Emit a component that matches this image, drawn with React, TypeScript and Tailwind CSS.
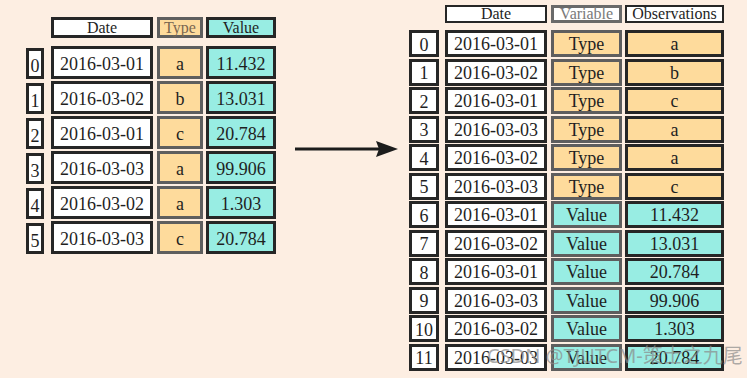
import React from 'react';

const serif = "font-['Liberation_Serif','Times_New_Roman',serif]";

const leftRows = [
  ['2016-03-01', 'a', '11.432'],
  ['2016-03-02', 'b', '13.031'],
  ['2016-03-01', 'c', '20.784'],
  ['2016-03-03', 'a', '99.906'],
  ['2016-03-02', 'a', '1.303'],
  ['2016-03-03', 'c', '20.784'],
];

const rightRows = [
  ['2016-03-01', 'Type', 'a'],
  ['2016-03-02', 'Type', 'b'],
  ['2016-03-01', 'Type', 'c'],
  ['2016-03-03', 'Type', 'a'],
  ['2016-03-02', 'Type', 'a'],
  ['2016-03-03', 'Type', 'c'],
  ['2016-03-01', 'Value', '11.432'],
  ['2016-03-02', 'Value', '13.031'],
  ['2016-03-01', 'Value', '20.784'],
  ['2016-03-03', 'Value', '99.906'],
  ['2016-03-02', 'Value', '1.303'],
  ['2016-03-03', 'Value', '20.784'],
];

const Cell = ({ children, className }: { children: React.ReactNode; className: string }) => (
  <div className={`flex items-center justify-center leading-none text-[#1f1f1f] ${className}`}>
    {children}
  </div>
);

const LeftTable = () => (
  <div className="ml-[26px] mt-[17px] flex flex-col">
    {/* header */}
    <div className="flex h-[21px] text-[16px]">
      <div className="w-[18px]" />
      <Cell className="ml-[7px] w-[102px] bg-white border-[3px] border-[#262626]">Date</Cell>
      <Cell className="ml-[4px] w-[46px] bg-[#fedb9c] border-[3px] border-[#5e5e5e] !text-[#7a6650]">Type</Cell>
      <Cell className="ml-[3px] w-[70px] bg-[#98ede3] border-[3px] border-[#262626]">Value</Cell>
    </div>
    <div className="mt-[8px] flex flex-col gap-[2px] text-[18px]">
      {leftRows.map((r, i) => (
        <div key={i} className="flex h-[33px]">
          <Cell className="mt-[2px] w-[18px] bg-white border-[3px] border-[#262626] pt-[4px]">{i}</Cell>
          <Cell className="ml-[7px] w-[102px] bg-white border-[3px] border-[#262626] pt-[2px]">{r[0]}</Cell>
          <Cell className="ml-[4px] w-[46px] bg-[#fedb9c] border-[3px] border-[#5e5e5e] pt-[2px]">{r[1]}</Cell>
          <Cell className="ml-[3px] w-[70px] bg-[#98ede3] border-[3px] border-[#262626] pt-[2px]">{r[2]}</Cell>
        </div>
      ))}
    </div>
  </div>
);

const RightTable = () => (
  <div className="ml-[10px] mt-[5px] flex flex-col">
    <div className="flex h-[18px] text-[16px]">
      <div className="w-[30px]" />
      <Cell className="ml-[6px] w-[102px] bg-white border-[2px] border-[#262626]">Date</Cell>
      <Cell className="ml-[4px] w-[71px] bg-white border-[3px] border-[#6a6a6a] !text-[#7a7a7a]">Variable</Cell>
      <Cell className="ml-[3px] w-[99px] bg-white border-[2px] border-[#262626]">Observations</Cell>
    </div>
    <div className="mt-[7px] flex flex-col gap-[1.5px] text-[18px]">
      {rightRows.map((r, i) => {
        const isType = r[1] === 'Type';
        const fill = isType ? 'bg-[#fedb9c]' : 'bg-[#98ede3]';
        return (
          <div key={i} className="flex h-[27px]">
            <Cell className="w-[30px] bg-white border-[3px] border-[#262626] pt-[2px]">{i}</Cell>
            <Cell className="ml-[6px] w-[102px] bg-white border-[3px] border-[#262626] pt-[1px]">{r[0]}</Cell>
            <Cell className={`ml-[4px] w-[71px] ${fill} border-[3px] border-[#5e5e5e] pt-[1px]`}>{r[1]}</Cell>
            <Cell className={`ml-[3px] w-[99px] ${fill} border-[3px] border-[#262626] pt-[1px]`}>{r[2]}</Cell>
          </div>
        );
      })}
    </div>
  </div>
);

const Arrow = () => (
  <svg className="ml-[19px] mt-[139px]" width="104" height="20" viewBox="0 0 104 20">
    <line x1="0" y1="10" x2="84" y2="10" stroke="#1c1c1c" strokeWidth="3" />
    <polygon points="81,2 103,10 81,18 84,10" fill="#1c1c1c" />
  </svg>
);

export default function App() {
  return (
    <div className={`relative w-[747px] h-[378px] overflow-hidden bg-[#fdeee2] ${serif}`}>
      <div className="flex items-start">
        <LeftTable />
        <Arrow />
        <RightTable />
      </div>
      {/* watermark */}
      <div className="absolute left-[487px] top-[346px] text-[20px] leading-none text-[#8a8a8a]/70 font-['Noto_Sans','Noto_Sans_CJK_SC',sans-serif]">
        CSDN @TJUTCM-策士之九尾
      </div>
    </div>
  );
}
